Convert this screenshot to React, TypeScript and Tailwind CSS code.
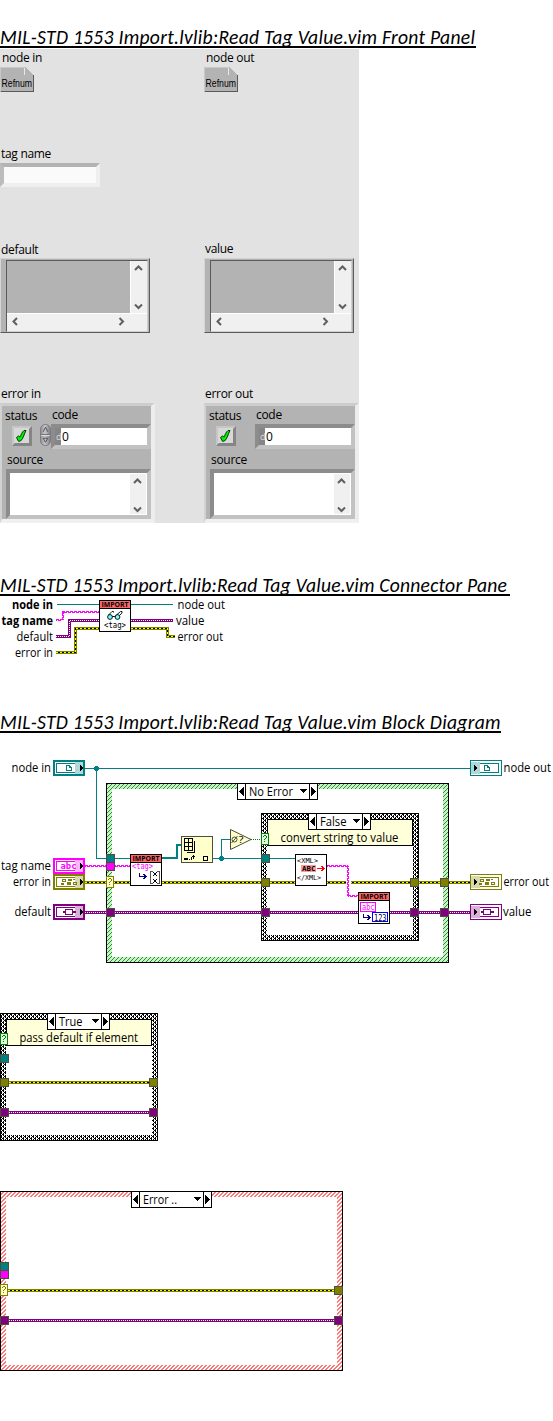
import type { ReactNode } from "react";

const TEAL = "#008080";
const OLIVE = "#808000";
const PURPLE = "#800080";
const PINK = "#ff00ff";

/* ---------- page headings ---------- */

function Title({ children, className }: { children: string; className: string }) {
  return (
    <h2
      className={`h-5 overflow-x-visible overflow-y-clip whitespace-nowrap border-b-2 border-black font-['Carlito','Lato'] text-[19.6px] leading-[18px] italic text-black ${className}`}
    >
      {children}
    </h2>
  );
}

/* ---------- front panel ---------- */

function Label({ children, className = "" }: { children: string; className?: string }) {
  return (
    <div
      className={`h-4 whitespace-nowrap font-['Open_Sans','Noto_Sans',sans-serif] text-[12px] leading-[18px] tracking-[-0.3px] text-black ${className}`}
    >
      {children}
    </div>
  );
}

function Refnum() {
  return (
    <svg width="34" height="25" viewBox="0 0 34 25" shapeRendering="crispEdges" className="block overflow-visible">
      <path d="M0 0H25L34 9V25H0Z" fill="#b3b3b3" />
      <path d="M0 0H25M0.5 0V24" stroke="#c8c8c8" fill="none" />
      <path d="M24.5 1V7.5" stroke="#e8e8e8" fill="none" />
      <path d="M33.5 8V25M1 24.5H34" stroke="#5a5a5a" fill="none" />
      <text x="1.500" y="20" fontFamily="Liberation Sans Narrow, Liberation Sans, sans-serif" fontSize="11.500" textLength="30.500" lengthAdjust="spacingAndGlyphs">
        Refnum
      </text>
    </svg>
  );
}

function Chevron({ dir }: { dir: "up" | "down" | "left" | "right" }) {
  const d = {
    up: "M1 6L4.5 2.5L8 6",
    down: "M1 2.5L4.5 6L8 2.5",
    left: "M6 1L2.5 4.5L6 8",
    right: "M2.5 1L6 4.5L2.5 8",
  }[dir];
  return (
    <svg width="9" height="9" viewBox="0 0 9 9" className="block">
      <path d={d} fill="none" stroke="#5f5f5f" strokeWidth="2" />
    </svg>
  );
}

function VariantBox() {
  return (
    <div className="h-[75px] w-[150px] border-t border-r border-b border-l border-t-[#cfcfcf] border-r-[#5a5a5a] border-b-[#5a5a5a] border-l-[#d6d6d6] bg-[#b3b3b3] pl-[5px] pt-px">
      <div className="flex h-[72px] w-[142px] flex-col border border-r-[#cfcfcf] border-b-[#cfcfcf] border-l-[#5a5a5a] border-t-[#5a5a5a]">
        <div className="flex h-[52px]">
          <div className="w-[123px] bg-[#b3b3b3]" />
          <div className="flex flex-1 flex-col items-center justify-between border-l border-white bg-[#f0f0f0] pb-[2px] pr-[2px] pt-[3px]">
            <Chevron dir="up" />
            <Chevron dir="down" />
          </div>
        </div>
        <div className="flex flex-1 items-center justify-between border-t border-white bg-[#f0f0f0] pb-[2px] pl-1 pr-[21px]">
          <Chevron dir="left" />
          <Chevron dir="right" />
        </div>
      </div>
    </div>
  );
}

function CheckLight() {
  return (
    <svg width="20" height="20" viewBox="0 0 20 20" className="block">
      <path d="M0 0H20L17 3H3V17L0 20Z" fill="#c6c6c6" />
      <path d="M20 0V20H0L3 17H17V3Z" fill="#858585" />
      <rect x="2" y="2" width="15" height="15" fill="#d8d8d8" />
      <path
        d="M4.500 11.500L6.500 10L8 11C9 9 10 6 12 4.500L14 4.500C12 8 11.500 12.500 8.500 15L6.500 15.300Z"
        fill="#00f000"
        stroke="#053805"
        strokeWidth="1"
      />
    </svg>
  );
}

function Spinner() {
  return (
    <svg width="12" height="24" viewBox="0 0 12 24" className="block">
      <defs>
        <linearGradient id="knob" x1="0" x2="1" y1="0" y2="0">
          <stop offset="0" stopColor="#8c8c90" />
          <stop offset="0.45" stopColor="#c9c9cd" />
          <stop offset="1" stopColor="#77777c" />
        </linearGradient>
      </defs>
      <rect x="0.500" y="0.500" width="11" height="23" rx="5.500" fill="url(#knob)" stroke="#77777c" />
      <path d="M1 11.500H11" stroke="#6a6a6e" />
      <path d="M1 12.500H11" stroke="#dcdce0" />
      <path d="M3.500 8.500L6 3.500L8.500 8.500" fill="none" stroke="#4c4c50" />
      <path d="M3.500 15.500H8.500L6 20Z" fill="none" stroke="#4c4c50" />
    </svg>
  );
}

function ErrorCluster({ control }: { control: boolean }) {
  return (
    <div className="h-[120px] w-[155px] border-b-4 border-l-2 border-r-4 border-t-[3px] border-b-[#f0f0f0] border-l-[#d2d2d2] border-r-[#ededed] border-t-[#cdcdcd] bg-[#b3b3b3]">
      <div className="flex h-[43px]">
        <div className="w-[38px] pl-[3px]">
          <Label className="mt-px">status</Label>
          <div className="ml-[7px] mt-[3px]">
            <CheckLight />
          </div>
        </div>
        <div className="flex w-[11px] items-end pb-[2px]">{control && <Spinner />}</div>
        <div className="w-[100px]">
          <Label className="ml-[1px]">code</Label>
          <div className="mt-[2px] flex h-[25px] w-[100px] border-4 border-b-[#c2c2c2] border-l-[#8c8c8c] border-r-[#c2c2c2] border-t-[#8c8c8c] bg-white">
            <div className="w-[6px] bg-[#858585] pl-px font-['Open_Sans',sans-serif] text-[9px] leading-[17px] text-[#dcdcdc]">d</div>
            <Label className="pl-px">0</Label>
          </div>
        </div>
      </div>
      <Label className="ml-[5px] mt-[2px]">source</Label>
      <div className="ml-1 mt-[2px] flex h-[50px] w-[145px] justify-end border-4 border-b-[#c2c2c2] border-l-[#8c8c8c] border-r-[#c2c2c2] border-t-[#8c8c8c] bg-white pb-px pr-px pt-px">
        <div className="flex w-4 flex-col items-center justify-between bg-[#f0f0f0] pr-px pt-[3px]">
          <Chevron dir="up" />
          <Chevron dir="down" />
        </div>
      </div>
    </div>
  );
}

function FrontPanel() {
  return (
    <section className="mt-px grid h-[474px] w-[359px] grid-cols-[204px_155px] grid-rows-[96px_95px_144px_139px] bg-[#e2e2e2]">
      <div>
        <Label className="ml-[2px]">node in</Label>
        <div className="mt-[2px]">
          <Refnum />
        </div>
      </div>
      <div>
        <Label className="ml-[2px]">node out</Label>
        <div className="mt-[2px]">
          <Refnum />
        </div>
      </div>
      <div className="col-span-2">
        <Label className="ml-px">tag name</Label>
        <div className="mt-[2px] h-6 w-[100px] border-4 border-b-[#efefef] border-l-[#bcbcbc] border-r-[#efefef] border-t-[#b3b3b3] bg-[#fafafa]" />
      </div>
      <div>
        <Label className="ml-px pt-px">default</Label>
        <div className="mt-[2px]">
          <VariantBox />
        </div>
      </div>
      <div>
        <Label className="ml-px">value</Label>
        <div className="mt-[2px]">
          <VariantBox />
        </div>
      </div>
      <div>
        <Label className="ml-px pt-px">error in</Label>
        <div className="mt-[3px]">
          <ErrorCluster control />
        </div>
      </div>
      <div>
        <Label className="ml-px pt-px">error out</Label>
        <div className="mt-[3px]">
          <ErrorCluster control={false} />
        </div>
      </div>
    </section>
  );
}

/* ---------- diagram drawing primitives ---------- */

function T({
  x,
  y,
  w,
  children,
  size = 12,
  bold = false,
  fill = "#000",
  mono = false,
}: {
  x: number;
  y: number;
  w: number;
  children: string;
  size?: number;
  bold?: boolean;
  fill?: string;
  mono?: boolean;
}) {
  return (
    <text
      x={x}
      y={y}
      fontSize={size}
      fontWeight={bold ? 700 : 400}
      fill={fill}
      fontFamily={mono ? "DejaVu Sans Mono, monospace" : "Open Sans, Noto Sans, sans-serif"}
      textLength={w}
      lengthAdjust="spacingAndGlyphs"
    >
      {children}
    </text>
  );
}

/* Wire paths run through pixel centres. */
function ErrorWire({ d }: { d: string }) {
  return (
    <g fill="none">
      <path d={d} stroke={OLIVE} strokeWidth="3" />
      <path d={d} stroke="#000" />
      <path d={d} stroke="#ffff00" strokeDasharray="2 2" />
    </g>
  );
}

function ValueWire({ d }: { d: string }) {
  return (
    <g fill="none">
      <path d={d} stroke={PURPLE} strokeWidth="3" />
      <path d={d} stroke="#fff" strokeDasharray="1 1" />
    </g>
  );
}

function StringWire({ d, dx = 0, dy = 1 }: { d: string; dx?: number; dy?: number }) {
  return (
    <g fill="none" stroke={PINK}>
      <path d={d} strokeDasharray="3 1" />
      <path d={d} strokeDasharray="3 1" strokeDashoffset="2" transform={`translate(${dx} ${dy})`} />
    </g>
  );
}

function RefWire({ d }: { d: string }) {
  return <path d={d} fill="none" stroke={TEAL} />;
}

function Junction({ x, y }: { x: number; y: number }) {
  return <path d={`M${x - 1} ${y - 2}h3v1h1v3h-1v1h-3v-1h-1v-3h1z`} fill={TEAL} />;
}

function Tunnel({ x, y, fill }: { x: number; y: number; fill: string }) {
  return <rect x={x + 0.5} y={y + 0.5} width="8" height="8" fill={fill} stroke="#4d4d3c" />;
}

function Selector({ x, y, tone, fill }: { x: number; y: number; tone: string; fill: string }) {
  return (
    <g>
      <rect x={x + 0.5} y={y + 0.5} width="7" height="11" fill={fill} stroke={tone} />
      <path d={`M${x + 2} ${y + 3}h1v1h-1zM${x + 3} ${y + 2}h2v1h-2zM${x + 5} ${y + 3}h1v2h-1zM${x + 4} ${y + 5}h1v1h-1zM${x + 3} ${y + 6}h1v1h-1zM${x + 3} ${y + 8}h1v1h-1z`} fill={tone} />
    </g>
  );
}

function Patterns() {
  return (
    <defs>
      <pattern id="check" width="4" height="4" patternUnits="userSpaceOnUse">
        <rect width="4" height="4" fill="#fff" />
        <path d="M0 0h2v1h-2zM1 1h1v1h-1zM3 1h1v1h-1zM2 2h2v1h-2zM1 3h1v1h-1zM3 3h1v1h-1z" fill="#000" />
      </pattern>
      <pattern id="ok" width="4" height="4" patternUnits="userSpaceOnUse">
        <rect width="4" height="4" fill="#b8ffb8" />
        <path d="M3 0h1v1h-1zM2 1h1v1h-1zM1 2h1v1h-1zM0 3h1v1h-1z" fill="#606a60" />
      </pattern>
      <pattern id="bad" width="4" height="4" patternUnits="userSpaceOnUse">
        <rect width="4" height="4" fill="#fff" />
        <path d="M2 0h2v1h-2zM1 1h2v1h-2zM0 2h2v1h-2zM0 3h1v1h-1zM3 3h1v1h-1z" fill="#ff7878" />
      </pattern>
    </defs>
  );
}

function Structure({ x, y, w, h, pattern }: { x: number; y: number; w: number; h: number; pattern: string }) {
  const checked = pattern === "check";
  return (
    <g>
      <rect x={x + 0.5} y={y + 0.5} width={w - 1} height={h - 1} fill={`url(#${pattern})`} stroke="#000" />
      <rect x={x + 6} y={y + 6} width={w - 12} height={h - 12} fill="#fff" />
      {checked && <rect x={x + 6.5} y={y + 6.5} width={w - 13} height="26" fill="#ffffd9" stroke="#000" />}
    </g>
  );
}

function CaseSelector({ x, y, w, text, textX, textW }: { x: number; y: number; w: number; text: string; textX: number; textW: number }) {
  const r = x + w;
  return (
    <g>
      <rect x={x + 0.5} y={y + 0.5} width={w - 1} height="16" fill="#fff" stroke="#000" />
      <path d={`M${x + 8.5} ${y}v17M${r - 8.5} ${y}v17`} stroke="#000" />
      <path d={`M${x + 7} ${y + 4}v9l-5 -4.500z`} />
      <path d={`M${r - 7} ${y + 4}v9l5 -4.500z`} />
      <path d={`M${r - 18.5} ${y + 6}h8l-4 4.500z`} />
      <T x={textX} y={y + 13} w={textW}>
        {text}
      </T>
    </g>
  );
}

function Terminal({
  x,
  y,
  color,
  tint,
  output = false,
  children,
}: {
  x: number;
  y: number;
  color: string;
  tint: string;
  output?: boolean;
  children: ReactNode;
}) {
  return (
    <g transform={`translate(${x} ${y})`}>
      {output ? (
        <rect x="0.500" y="0.500" width="31" height="15" fill="#fff" stroke={color} />
      ) : (
        <rect x="1" y="1" width="30" height="14" fill="#fff" stroke={color} strokeWidth="2" />
      )}
      <rect x={output ? 1 : 22} y="2" width={output ? 9 : 8} height="12" fill={tint} />
      <rect x="3.500" y="3.500" width="25" height="9" fill="none" stroke={color} />
      <rect x={output ? 3 : 22} y="3" width="7" height="10" fill={tint} />
      <path d={output ? "M4 4.500v7l4 -3.500z" : "M27 4.500v7l4 -3.500z"} fill="#000" />
      <g transform={output ? "translate(1 0)" : undefined}>{children}</g>
    </g>
  );
}

function RefGlyph() {
  return <path d="M13.500 5.500h3l2 2v3h-5zM16.500 5.500v2h2" fill="none" stroke={TEAL} />;
}

function ErrorGlyph() {
  return (
    <g>
      <path d="M9.500 5.500h3v2h-3zM20.500 8.500h3v2h-3z" fill="none" stroke={OLIVE} />
      <path d="M15 5h4v2h-4zM20 5h2v1h-2zM8 9h3v2h-3zM14 8h4v3h-4z" fill={OLIVE} />
    </g>
  );
}

function ValueGlyph() {
  return (
    <g>
      <rect x="12.500" y="5.500" width="7" height="5" fill="#fff" stroke={PURPLE} />
      <path d="M10 7h2v2h-2zM20 7h3v2h-3z" fill={PURPLE} />
    </g>
  );
}

function IconFrame({ x, y, header, children }: { x: number; y: number; header: boolean; children: ReactNode }) {
  return (
    <g transform={`translate(${x} ${y})`}>
      <rect x="0.500" y="0.500" width="31" height="31" fill="#fff" stroke="#000" />
      {header && (
        <g>
          <rect x="1" y="1" width="30" height="7" fill="#ff6666" />
          <path d="M1 8.500h30" stroke="#000" />
          <T x={2.500} y={7.300} w={27} size={7.500} bold>
            IMPORT
          </T>
        </g>
      )}
      {children}
    </g>
  );
}

function HookArrow({ x, y }: { x: number; y: number }) {
  return <path d={`M${x + 0.5} ${y}v3.500h6M${x + 4.5} ${y + 1}l2.500 2.500l-2.500 2.500`} fill="none" stroke="#00008b" />;
}

/* ---------- diagrams ---------- */

function ConnectorPane() {
  return (
    <svg width="553" height="74" viewBox="0 596 553 74" shapeRendering="crispEdges" className="block">
      <RefWire d="M57 604.500H99M131 604.500H173" />
      <StringWire d="M56 619.500H62" />
      <StringWire d="M62.500 620V612" dx={1} dy={0} />
      <StringWire d="M62 611.500H99" />
      <ValueWire d="M56 636.500H69.500V620.500H99M131 620.500H173" />
      <ErrorWire d="M56 652.500H75.500V628.500H99M131 628.500H167.500V636.500H175" />
      <IconFrame x={99} y={600} header>
        <g fill="none" stroke="#000" strokeWidth="0.900" shapeRendering="auto">
          <circle cx="11" cy="17" r="2.400" fill="#70ffff" />
          <circle cx="18.500" cy="17" r="2.400" fill="#70ffff" />
          <path d="M13.300 16.500h3M9.500 15l3.500 -3.500h1.500v1M17.500 15l4 -3.500h1.500v1.500M20.500 15.500l2.500 -2.500" />
        </g>
        <T x={5} y={27.500} w={22} size={9} mono>
          {"<tag>"}
        </T>
      </IconFrame>
      <T x={12} y={609} w={41} bold>node in</T>
      <T x={1.500} y={625} w={51.500} bold>tag name</T>
      <T x={16.500} y={641} w={36.500}>default</T>
      <T x={15} y={657} w={38}>error in</T>
      <T x={177.500} y={609} w={47.500}>node out</T>
      <T x={176} y={625} w={28.500}>value</T>
      <T x={177.500} y={641} w={45.500}>error out</T>
    </svg>
  );
}

function MainDiagram() {
  return (
    <svg width="553" height="213" viewBox="0 755 553 213" shapeRendering="crispEdges" className="block">
      <Patterns />
      <Structure x={106} y={783} w={343} h={180} pattern="ok" />
      <Structure x={261} y={813} w={158} h={128} pattern="check" />

      <RefWire d="M85 768.500H470M96.500 768.500V858.500H130M213 858.500H295M221.500 858V839.500H230" />
      <path d="M162 858H177V845H181" fill="none" stroke={TEAL} strokeWidth="2" />
      <Junction x={96} y={768} />
      <Junction x={221} y={858} />
      <StringWire d="M85 865.500H130" />
      <ErrorWire d="M85 882.500H130M162 882.500H470" />
      <ValueWire d="M85 912.500H358M390 912.500H470" />
      <rect x="346" y="880" width="5" height="5" fill="#fff" />
      <StringWire d="M327 865.500H348" />
      <StringWire d="M347.500 866V896" dx={1} dy={0} />
      <StringWire d="M348 895.500H358" />
      <path d="M251 839.500H261" stroke="#008000" strokeDasharray="1 1" />

      <Tunnel x={106} y={854} fill={TEAL} />
      <Tunnel x={106} y={862} fill={PINK} />
      <Selector x={106} y={876} tone={OLIVE} fill="#ffffcc" />
      <Tunnel x={106} y={908} fill={PURPLE} />
      <Tunnel x={261} y={854} fill={TEAL} />
      <Selector x={261} y={833} tone="#008000" fill="#e0ffe0" />
      {[261, 410, 440].map((x) => (
        <g key={x}>
          <Tunnel x={x} y={878} fill={OLIVE} />
          <Tunnel x={x} y={908} fill={PURPLE} />
        </g>
      ))}

      <Terminal x={53} y={760} color={TEAL} tint="#b0d8d8"><RefGlyph /></Terminal>
      <Terminal x={53} y={858} color={PINK} tint="#ffb0ff">
        <T x={7.500} y={11} w={16} size={9} bold mono fill={PINK}>abc</T>
      </Terminal>
      <Terminal x={53} y={874} color={OLIVE} tint="#d8d8b0"><ErrorGlyph /></Terminal>
      <Terminal x={53} y={904} color={PURPLE} tint="#d8b0d8"><ValueGlyph /></Terminal>
      <Terminal x={470} y={760} color={TEAL} tint="#b0d8d8" output><RefGlyph /></Terminal>
      <Terminal x={470} y={874} color={OLIVE} tint="#d8d8b0" output><ErrorGlyph /></Terminal>
      <Terminal x={470} y={904} color={PURPLE} tint="#d8b0d8" output><ValueGlyph /></Terminal>

      <IconFrame x={130} y={854} header>
        <T x={2} y={15} w={21} size={9} mono fill={PINK}>{"<tag>"}</T>
        <HookArrow x={9} y={19} />
        <path d="M23 17.500h-2.500v12h2.500M27 17.500h2.500v12h-2.500" fill="none" stroke="#555" />
        <path d="M23 18h1v1h-1zM26 18h1v1h-1zM24 19h2v2h-2zM23 21h1v1h-1zM26 21h1v1h-1zM23 25h1v1h-1zM26 25h1v1h-1zM24 26h2v2h-2zM23 28h1v1h-1zM26 28h1v1h-1z" />
      </IconFrame>

      <g>
        <rect x="181.500" y="836.500" width="31" height="26" fill="#ffffcc" stroke="#4d4d3c" />
        <path d="M184.500 838.500h8v12h-8zM184.500 842.500h8M184.500 846.500h8M188.500 838v12M194.500 841v11.500h-8" fill="none" stroke="#000" />
        <path d="M184 858h4v2h-4zM189 859h1v1h-1zM191 857h1v3h-1zM193 855h1v4h-1zM192 856h3v1h-3z" />
        <rect x="203.500" y="856.500" width="4" height="4" fill="none" stroke="#000" />
      </g>

      <g shapeRendering="auto">
        <path d="M230.500 829.500L251 839.500L230.500 849.500Z" fill="#ffffcc" stroke="#4d4d3c" />
        <circle cx="234.500" cy="839.500" r="2.500" fill="none" stroke="#4d4d3c" />
        <path d="M231.500 843L237.500 836" stroke="#4d4d3c" />
        <T x={238.500} y={843} w={5} size={9}>?</T>
      </g>

      <IconFrame x={295} y={854} header={false}>
        <rect x="6" y="11" width="15" height="7" fill="#ff9999" />
        <T x={2} y={8.500} w={21} size={6.800} mono>{"<XML>"}</T>
        <T x={7} y={17.200} w={13.500} size={6.800} bold mono>ABC</T>
        <path d="M22 14.500h7M26.500 12l2.500 2.500l-2.500 2.500" fill="none" stroke="#ff0000" />
        <T x={2} y={25.700} w={24} size={6.800} mono>{"</XML>"}</T>
      </IconFrame>

      <IconFrame x={358} y={892} header>
        <rect x="2.500" y="10.500" width="15" height="9" fill="none" stroke={PINK} />
        <T x={4} y={18} w={12.500} size={8} mono fill={PINK}>abc</T>
        <HookArrow x={5} y={22} />
        <rect x="14.500" y="20.500" width="15" height="9" fill="none" stroke="#0000ff" />
        <T x={16} y={28.500} w={12.500} size={8} mono>123</T>
      </IconFrame>

      <CaseSelector x={237} y={783} w={81} text="No Error" textX={249} textW={44} />
      <CaseSelector x={308} y={813} w={63} text="False" textX={320} textW={26.500} />
      <T x={280.500} y={842} w={118}>convert string to value</T>

      <T x={11.500} y={772} w={39.500}>node in</T>
      <T x={1} y={870} w={50}>tag name</T>
      <T x={13} y={886} w={38}>error in</T>
      <T x={14.500} y={916} w={36.500}>default</T>
      <T x={503.500} y={772} w={47.500}>node out</T>
      <T x={503.500} y={886} w={45.500}>error out</T>
      <T x={503} y={916} w={28.500}>value</T>
    </svg>
  );
}

function TrueCase() {
  return (
    <svg width="158" height="128" viewBox="0 1013 158 128" shapeRendering="crispEdges" className="block">
      <Structure x={0} y={1013} w={158} h={128} pattern="check" />
      <ErrorWire d="M9 1082.500H149" />
      <ValueWire d="M9 1112.500H149" />
      <Selector x={0} y={1033} tone="#008000" fill="#e0ffe0" />
      <Tunnel x={0} y={1054} fill={TEAL} />
      <Tunnel x={0} y={1078} fill={OLIVE} />
      <Tunnel x={149} y={1078} fill={OLIVE} />
      <Tunnel x={0} y={1108} fill={PURPLE} />
      <Tunnel x={149} y={1108} fill={PURPLE} />
      <CaseSelector x={47} y={1013} w={63} text="True" textX={59} textW={23.500} />
      <T x={19.500} y={1042} w={118.500}>pass default if element</T>
    </svg>
  );
}

function ErrorCase() {
  return (
    <svg width="343" height="180" viewBox="0 1191 343 180" shapeRendering="crispEdges" className="block">
      <Structure x={0} y={1191} w={343} h={180} pattern="bad" />
      <ErrorWire d="M8 1290.500H334" />
      <ValueWire d="M9 1320.500H334" />
      <Tunnel x={0} y={1262} fill={TEAL} />
      <Tunnel x={0} y={1270} fill={PINK} />
      <Selector x={0} y={1284} tone={OLIVE} fill="#ffffcc" />
      <Tunnel x={334} y={1286} fill={OLIVE} />
      <Tunnel x={0} y={1316} fill={PURPLE} />
      <Tunnel x={334} y={1316} fill={PURPLE} />
      <CaseSelector x={131} y={1191} w={81} text="Error .." textX={143} textW={34} />
    </svg>
  );
}

export default function App() {
  return (
    <main className="flex h-[1421px] w-[553px] flex-col items-start overflow-hidden bg-white pt-7">
      <Title className="w-[476px] tracking-[0.28px]">MIL-STD 1553 Import.lvlib:Read Tag Value.vim Front Panel</Title>
      <FrontPanel />
      <Title className="mt-[53px] w-[510px] tracking-[0.22px]">MIL-STD 1553 Import.lvlib:Read Tag Value.vim Connector Pane</Title>
      <ConnectorPane />
      <Title className="mt-[43px] w-[501px] tracking-[0.27px]">MIL-STD 1553 Import.lvlib:Read Tag Value.vim Block Diagram</Title>
      <div className="mt-[22px]">
        <MainDiagram />
      </div>
      <div className="mt-[45px]">
        <TrueCase />
      </div>
      <div className="mt-[50px]">
        <ErrorCase />
      </div>
    </main>
  );
}
